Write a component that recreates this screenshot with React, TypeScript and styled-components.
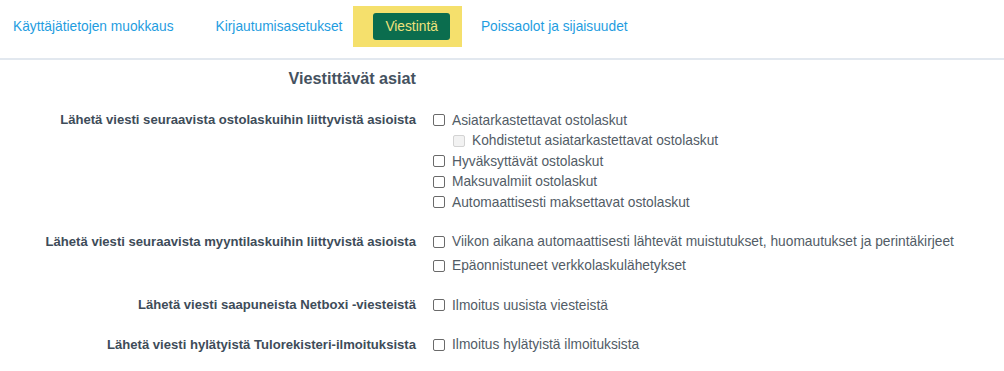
import React from "react";
import styled, { createGlobalStyle } from "styled-components";

const GlobalStyle = createGlobalStyle`
  body {
    margin: 0;
    background: #ffffff;
    font-family: "Liberation Sans", Arial, sans-serif;
  }
`;

type Option = { text: string; sub?: boolean; disabled?: boolean };
type Group = { label: string; spacing?: number; options: Option[] };

const groups: Group[] = [
  {
    label: "Lähetä viesti seuraavista ostolaskuihin liittyvistä asioista",
    options: [
      { text: "Asiatarkastettavat ostolaskut" },
      { text: "Kohdistetut asiatarkastettavat ostolaskut", sub: true, disabled: true },
      { text: "Hyväksyttävät ostolaskut" },
      { text: "Maksuvalmiit ostolaskut" },
      { text: "Automaattisesti maksettavat ostolaskut" },
    ],
  },
  {
    label: "Lähetä viesti seuraavista myyntilaskuihin liittyvistä asioista",
    spacing: 3.5,
    options: [
      { text: "Viikon aikana automaattisesti lähtevät muistutukset, huomautukset ja perintäkirjeet" },
      { text: "Epäonnistuneet verkkolaskulähetykset" },
    ],
  },
  {
    label: "Lähetä viesti saapuneista Netboxi -viesteistä",
    options: [{ text: "Ilmoitus uusista viesteistä" }],
  },
  {
    label: "Lähetä viesti hylätyistä Tulorekisteri-ilmoituksista",
    options: [{ text: "Ilmoitus hylätyistä ilmoituksista" }],
  },
];

export default function App() {
  return (
    <>
      <GlobalStyle />
      <TabBar>
        <Tab $after={42}>Käyttäjätietojen muokkaus</Tab>
        <Tab $after={11}>Kirjautumisasetukset</Tab>
        <ActiveTabWrap>
          <ActiveTab>Viestintä</ActiveTab>
        </ActiveTabWrap>
        <Tab $after={0}>Poissaolot ja sijaisuudet</Tab>
      </TabBar>

      <Settings>
        <Heading>Viestittävät asiat</Heading>
        <span />
        {groups.map((g) => (
          <React.Fragment key={g.label}>
            <GroupLabel>{g.label}</GroupLabel>
            <OptionList $spacing={g.spacing ?? 0}>
              {g.options.map((o) => (
                <OptionRow key={o.text} $sub={!!o.sub}>
                  <Check type="checkbox" disabled={o.disabled} />
                  <span>{o.text}</span>
                </OptionRow>
              ))}
            </OptionList>
          </React.Fragment>
        ))}
      </Settings>
    </>
  );
}

const TabBar = styled.nav`
  display: flex;
  align-items: center;
  height: 52px;
  padding: 0 0 6px 13px;
  border-bottom: 2px solid #e2e8ef;
`;

const Tab = styled.a<{ $after: number }>`
  margin-right: ${(p) => p.$after}px;
  font-size: 13.75px;
  color: #1f9ddf;
  cursor: pointer;
  white-space: nowrap;
`;

const ActiveTabWrap = styled.div`
  display: flex;
  align-items: center;
  height: 41px;
  padding: 0 12px 0 20px;
  margin-right: 19px;
  background: #f5e06c;
`;

const ActiveTab = styled.button`
  height: 27px;
  padding: 0 12px;
  border: none;
  border-radius: 3px;
  background: #0b6d4e;
  color: #f0e27c;
  font-family: "Liberation Sans", Arial, sans-serif;
  font-size: 13.75px;
`;

const Settings = styled.div`
  display: grid;
  grid-template-columns: 416px 1fr;
  column-gap: 17px;
  row-gap: 19px;
  padding-top: 8px;
  color: #3e4c59;
`;

const Heading = styled.h3`
  margin: 0 0 3px;
  text-align: right;
  font-size: 16.2px;
  line-height: 20px;
  font-weight: bold;
  color: #45525f;
`;

const GroupLabel = styled.div`
  text-align: right;
  font-size: 13.1px;
  font-weight: bold;
  line-height: 20.5px;
  white-space: nowrap;
`;

const OptionList = styled.div<{ $spacing: number }>`
  display: flex;
  flex-direction: column;
  gap: ${(p) => p.$spacing}px;
`;

const OptionRow = styled.label<{ $sub: boolean }>`
  display: flex;
  align-items: center;
  gap: 7px;
  height: 20.5px;
  padding-left: ${(p) => (p.$sub ? 20 : 0)}px;
  font-size: 13.75px;
  color: #525c66;
  white-space: nowrap;
`;

const Check = styled.input`
  appearance: none;
  width: 12px;
  height: 12px;
  margin: 0;
  border: 1px solid #6a6a6a;
  border-radius: 2px;
  background: #ffffff;

  &:disabled {
    border-color: #d3d3d3;
    background: #f2f2f2;
  }
`;
